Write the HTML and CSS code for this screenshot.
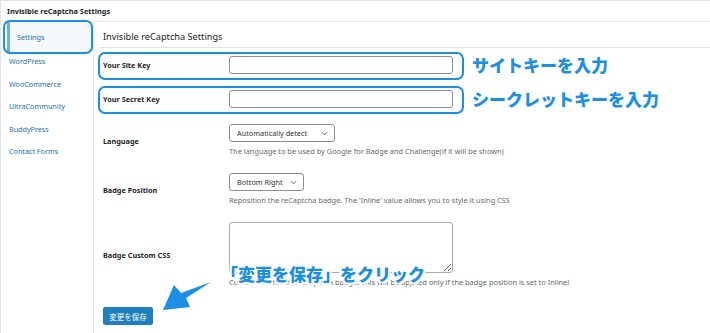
FILE: index.html
```html
<!DOCTYPE html>
<html lang="ja">
<head>
    <meta charset="UTF-8">
    <title>Invisible reCaptcha Settings</title>
    <link rel="stylesheet" href="styles.css">
</head>
<body>
    <div class="page">
        <div class="topbar">Invisible reCaptcha Settings</div>
        <div class="layout">
            <nav class="sidebar">
                <a class="nav-item active">Settings</a>
                <a class="nav-item">WordPress</a>
                <a class="nav-item">WooCommerce</a>
                <a class="nav-item">UltraCommunity</a>
                <a class="nav-item">BuddyPress</a>
                <a class="nav-item">Contact Forms</a>
                <span class="nav-mark"></span>
            </nav>
            <main class="main">
                <h2 class="title">Invisible reCaptcha Settings</h2>

                <div class="row">
                    <label class="row-label">Your Site Key</label>
                    <div class="field"><input type="text" class="text-input"></div>
                    <span class="mark"></span>
                    <span class="note">サイトキーを入力</span>
                </div>

                <div class="row">
                    <label class="row-label">Your Secret Key</label>
                    <div class="field"><input type="text" class="text-input"></div>
                    <span class="mark"></span>
                    <span class="note">シークレットキーを入力</span>
                </div>

                <div class="row">
                    <label class="row-label">Language</label>
                    <div class="field">
                        <div class="select select-lang">Automatically detect
                            <svg class="chevron" viewBox="0 0 8 5"><path d="M1 1l3 3 3-3" fill="none" stroke="#50575e" stroke-width="1"/></svg>
                        </div>
                        <p class="desc">The language to be used by Google for Badge and Challenge(if it will be shown)</p>
                    </div>
                </div>

                <div class="row">
                    <label class="row-label">Badge Position</label>
                    <div class="field">
                        <div class="select">Bottom Right
                            <svg class="chevron" viewBox="0 0 8 5"><path d="M1 1l3 3 3-3" fill="none" stroke="#50575e" stroke-width="1"/></svg>
                        </div>
                        <p class="desc">Reposition the reCaptcha badge. The 'Inline' value allows you to style it using CSS</p>
                    </div>
                </div>

                <div class="row">
                    <label class="row-label">Badge Custom CSS</label>
                    <div class="field">
                        <textarea class="textarea"></textarea>
                        <p class="desc">Custom CSS for the reCaptcha badge. This will be applied only if the badge position is set to Inline!</p>
                    </div>
                </div>

                <button class="save">変更を保存</button>

                <div class="callout">「変更を保存」をクリック</div>
                <svg class="arrow" width="56" height="36" viewBox="0 0 56 36">
                    <polygon points="3,32 14,7 21,15 51,4 26,20 30,29" fill="#1a8fe3"/>
                </svg>
            </main>
        </div>
    </div>
</body>
</html>
```

FILE: styles.css
```css
* {
    box-sizing: border-box;
}
body {
    margin: 0;
    background-color: #ffffff;
    font-family: 'Noto Sans', 'Open Sans', sans-serif;
    color: #1d2327;
}
.page {
    width: 710px;
    height: 333px;
    border-top: 1px solid #e2e4e7;
    border-left: 1px solid #e2e4e7;
    overflow: hidden;
}
.topbar {
    height: 21px;
    line-height: 20px;
    padding-left: 6px;
    font-size: 7.4px;
    font-weight: bold;
    border-bottom: 1px solid #e2e4e7;
}
.layout {
    display: flex;
    height: 312px;
}
.sidebar {
    position: relative;
    width: 93px;
    flex-shrink: 0;
    border-right: 1px solid #e2e4e7;
    padding-left: 6px;
}
.nav-item {
    display: block;
    height: 18px;
    line-height: 18px;
    margin-top: 4.5px;
    padding-left: 2px;
    font-size: 7.2px;
    color: #2271b1;
}
.nav-item.active {
    height: 30px;
    line-height: 30px;
    margin-top: 0;
    margin-bottom: -4.5px;
    padding-left: 7px;
    background-color: #f4f8fb;
    border-left: 3px solid #72aee6;
}
.nav-mark {
    position: absolute;
    left: 2px;
    top: -2px;
    width: 90px;
    height: 34px;
    border: 2px solid #1a8fe3;
    border-radius: 7px;
}
.main {
    position: relative;
    flex: 1;
    padding-left: 5px;
}
.title {
    margin: 0;
    height: 26px;
    padding: 5px 0 0 4px;
    line-height: 20px;
    font-size: 9.2px;
    font-weight: normal;
    color: #1d2327;
    border-bottom: 1px solid #e2e4e7;
}
.row {
    position: relative;
    display: grid;
    grid-template-columns: 126px 1fr;
    align-items: center;
    padding: 8px 0 8px 4px;
}
.row-label {
    font-size: 7.3px;
    font-weight: bold;
    color: #1d2327;
}
.field {
    display: flex;
    flex-direction: column;
    align-items: flex-start;
}
.text-input {
    display: block;
    width: 224px;
    height: 18px;
    border: 1px solid #8c8f94;
    border-radius: 3px;
    background: #fff;
}
.select {
    position: relative;
    height: 18px;
    line-height: 16px;
    padding: 0 20px 0 7px;
    font-size: 7.3px;
    color: #2c3338;
    border: 1px solid #8c8f94;
    border-radius: 3px;
}
.select-lang {
    width: 106px;
}
.chevron {
    position: absolute;
    right: 6px;
    top: 6px;
    width: 7px;
    height: 5px;
}
.desc {
    margin: 4px 0 0;
    line-height: 11px;
    font-size: 7.4px;
    color: #646970;
    white-space: nowrap;
}
.textarea {
    display: block;
    width: 224px;
    height: 51px;
    resize: both;
    border: 1px solid #a7aaad;
    border-radius: 3px;
    margin: 0;
}
.mark {
    position: absolute;
    left: -1px;
    top: 4px;
    width: 366px;
    height: 28px;
    border: 2px solid #1a8fe3;
    border-radius: 7px;
}
.note {
    position: absolute;
    left: 373px;
    top: 5px;
    font-family: 'Noto Sans CJK JP', sans-serif;
    font-size: 17px;
    font-weight: 900;
    line-height: 24px;
    color: #1a8fe3;
}
.save {
    display: block;
    margin: 11px 0 0 4px;
    width: 50px;
    height: 18px;
    padding: 0;
    border: none;
    border-radius: 2px;
    background-color: #1f80bf;
    color: #ffffff;
    font-family: 'Noto Sans CJK JP', sans-serif;
    font-size: 7.5px;
}
.callout {
    position: absolute;
    left: 127px;
    top: 241px;
    font-family: 'Noto Sans CJK JP', sans-serif;
    font-size: 17px;
    font-weight: 900;
    line-height: 22px;
    color: #1a8fe3;
    text-shadow: 1px 0 #fff, -1px 0 #fff, 0 1px #fff, 0 -1px #fff,
                 2px 2px #fff, -2px 2px #fff, 2px -2px #fff, -2px -2px #fff;
}
.arrow {
    position: absolute;
    left: 66px;
    top: 256px;
}
```
